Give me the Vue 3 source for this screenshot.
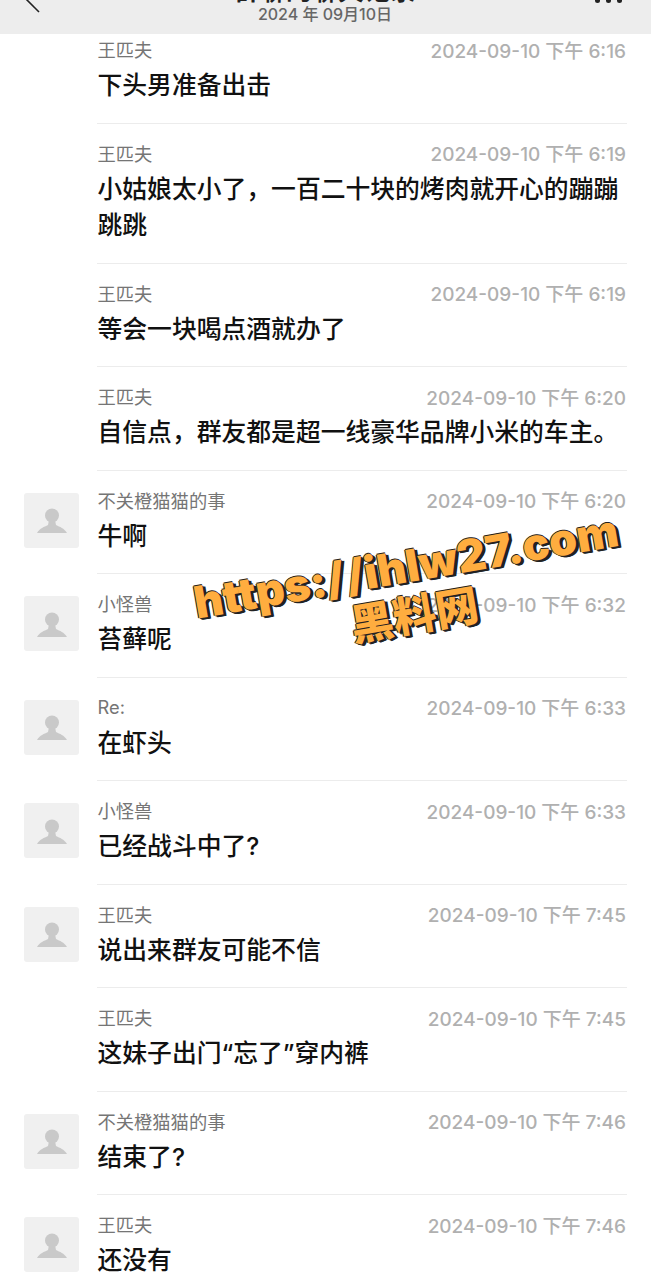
<script setup>
const messages = [
  { name: '王匹夫', time: '6:16', text: '下头男准备出击', avatar: false },
  { name: '王匹夫', time: '6:19', text: '小姑娘太小了，一百二十块的烤肉就开心的蹦蹦跳跳', avatar: false },
  { name: '王匹夫', time: '6:19', text: '等会一块喝点酒就办了', avatar: false },
  { name: '王匹夫', time: '6:20', text: '自信点，群友都是超一线豪华品牌小米的车主。', avatar: false },
  { name: '不关橙猫猫的事', time: '6:20', text: '牛啊', avatar: true },
  { name: '小怪兽', time: '6:32', text: '苔藓呢', avatar: true },
  { name: 'Re:', time: '6:33', text: '在虾头', avatar: true },
  { name: '小怪兽', time: '6:33', text: '已经战斗中了?', avatar: true },
  { name: '王匹夫', time: '7:45', text: '说出来群友可能不信', avatar: true },
  { name: '王匹夫', time: '7:45', text: '这妹子出门“忘了”穿内裤', avatar: false },
  { name: '不关橙猫猫的事', time: '7:46', text: '结束了?', avatar: true },
  { name: '王匹夫', time: '7:46', text: '还没有', avatar: true }
]
</script>

<template>
  <div class="page">
    <header class="topbar">
      <svg class="back" width="31" height="14" viewBox="0 0 31 14">
        <path d="M2 -1 L15 12" fill="none" stroke="#222" stroke-width="1.6" />
      </svg>
      <div class="heading">
        <div class="title">群聊的聊天记录</div>
        <div class="date">2024 年 09月10日</div>
      </div>
      <div class="more"><i></i><i></i><i></i></div>
    </header>

    <div class="list">
      <div v-for="(m, i) in messages" :key="i" class="row">
        <div class="avatar-slot">
          <div v-if="m.avatar" class="avatar">
            <svg width="30" height="30" viewBox="0 0 30 30">
              <circle cx="15" cy="10.5" r="7" fill="#c9c9c9" />
              <path d="M12 15 L18 15 L19 20 C23 22 27 23 30 28 L0 28 C3 23 7 22 11 20 Z" fill="#c9c9c9" />
            </svg>
          </div>
        </div>
        <div class="body">
          <div class="meta">
            <span class="name">{{ m.name }}</span>
            <span class="time">2024-09-10 下午 {{ m.time }}</span>
          </div>
          <div class="text">{{ m.text }}</div>
        </div>
      </div>
    </div>

    <div class="mark">
      <div class="mark-url">https:/ /ihlw27.com</div>
      <div class="mark-cn">黑料网</div>
    </div>
  </div>
</template>

<style>
html, body { margin: 0; background: #fff; }
</style>

<style scoped>
.page {
  position: relative;
  width: 651px;
  height: 1280px;
  overflow: hidden;
  background: #fff;
  font-family: "Inter", "Noto Sans CJK SC", sans-serif;
}
.topbar {
  height: 34px;
  background: #ededed;
  display: flex;
  align-items: flex-end;
  justify-content: space-between;
  overflow: hidden;
  padding: 0 29px 0 24px;
}
.back { align-self: flex-start; }
.heading {
  text-align: center;
  padding-bottom: 11px;
}
.title {
  font-size: 26px;
  line-height: 24px;
  font-weight: 700;
  color: #222;
  white-space: nowrap;
  margin-bottom: 2px;
}
.date {
  font-size: 16px;
  line-height: 18px;
  font-weight: 500;
  color: #666;
}
.more {
  align-self: flex-start;
  display: flex;
  gap: 6px;
  margin-top: -2px;
}
.more i {
  width: 5px;
  height: 5px;
  border-radius: 50%;
  background: #222;
}
.list {
  display: flex;
  flex-direction: column;
}
.row {
  display: flex;
  padding-left: 24px;
  padding-right: 24px;
}
.row:first-child .body { padding-top: 4px; }
.avatar-slot {
  width: 55px;
  margin-right: 18px;
  flex-shrink: 0;
}
.avatar {
  width: 55px;
  height: 55px;
  margin-top: 22px;
  border-radius: 3px;
  background: #f0f0f0;
  display: flex;
  align-items: center;
  justify-content: center;
}
.body {
  flex: 1;
  min-width: 0;
  padding: 18px 0 19px;
  border-bottom: 1px solid #ececec;
}
.row:last-child .body { border-bottom: 0; }
.meta {
  display: flex;
  justify-content: space-between;
  align-items: center;
  height: 22px;
}
.name {
  font-size: 18.3px;
  color: #757575;
  margin-left: 0.5px;
}
.time {
  font-size: 19px;
  font-weight: 500;
  color: #b0b0b0;
  white-space: nowrap;
  margin-right: 1px;
}
.text {
  margin-top: 7px;
  margin-left: 0.5px;
  font-size: 24.8px;
  line-height: 36.5px;
  font-weight: 500;
  color: #111;
}
.mark {
  position: absolute;
  left: 190px;
  top: 544px;
  width: 440px;
  text-align: center;
  transform: rotate(-9.8deg);
  font-size: 44.5px;
  font-weight: 900;
  color: #ffad3f;
  white-space: nowrap;
  text-shadow: 1px 1px 0 #222, 2px 2px 0 #222, 3px 2px 0 #222, -1px 0 0 #222, 0 -1px 0 #222;
}
.mark-url {
  line-height: 44px;
  word-spacing: -7px;
}
.mark-cn {
  font-size: 43px;
  line-height: 42px;
  margin-top: 6px;
}
</style>
